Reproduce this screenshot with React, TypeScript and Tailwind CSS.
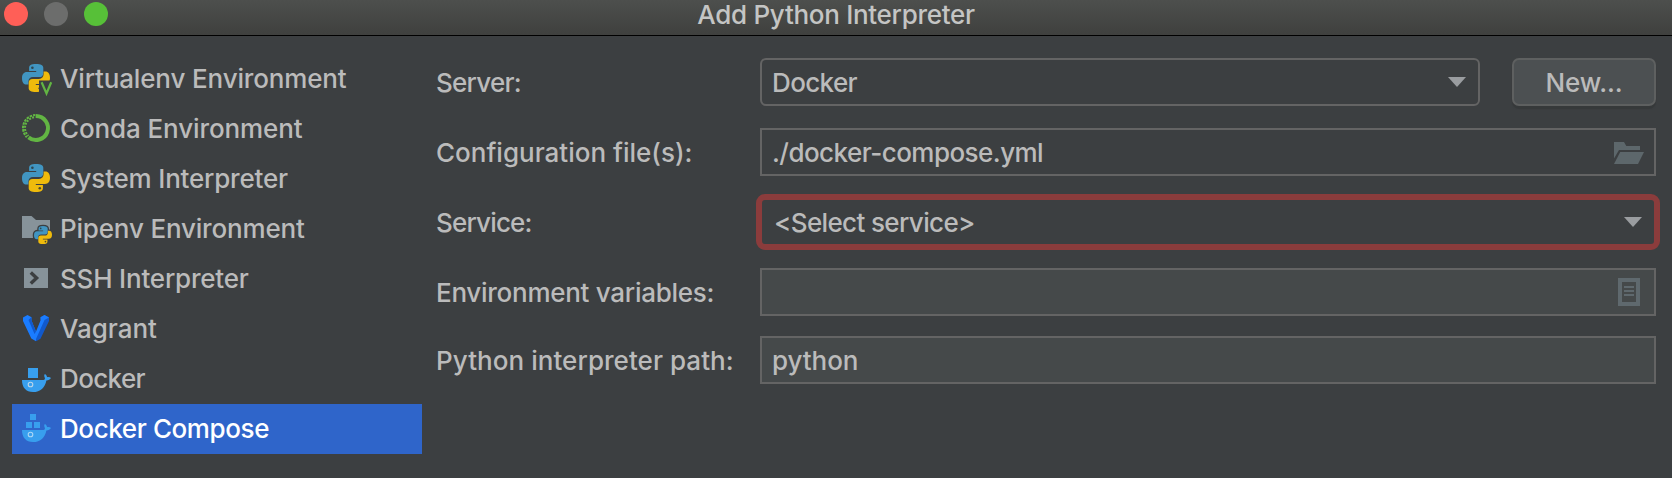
import type { ReactNode } from "react";

const SNAKE =
  "M14 0C9 0 7.1 1.3 7.1 4V7H14.2V8H5C1.7 8 0 10.3 0 14.2S1.7 20.6 4.6 20.6H6.4V18C6.4 15 8.2 13.1 11 13.1H17.4C20 13.1 21.3 11.6 21.3 9.2V4C21.3 1.3 19 0 14 0Z";

function PythonShape() {
  return (
    <>
      <path d={SNAKE} fill="#4195c1" />
      <circle cx="10.4" cy="3.8" r="1.3" fill="#2f4650" />
      <g transform="rotate(180 14 14)">
        <path d={SNAKE} fill="#efbb0c" />
        <circle cx="10.2" cy="3.8" r="1.3" fill="#4d4a30" />
      </g>
    </>
  );
}

function Icon({ children }: { children: ReactNode }) {
  return (
    <svg viewBox="0 0 32 32" className="size-8 shrink-0">
      {children}
    </svg>
  );
}

function VirtualenvIcon() {
  return (
    <Icon>
      <PythonShape />
      <path d="M17 16.5H32V32H20.5L17 28Z" fill="#3c3f41" />
      <path d="M19.6 18.2 24.5 29.4 29.2 18.2" fill="none" stroke="#62b543" strokeWidth="2.2" />
    </Icon>
  );
}

function CondaIcon() {
  return (
    <Icon>
      <path d="M14 2A12 12 0 1 1 6.5 23.4" fill="none" stroke="#62b543" strokeWidth="4" />
      <path d="M13.5 1A13 13 0 0 0 4.8 23.2" fill="none" stroke="#62b543" strokeWidth="2" strokeDasharray="2.5 1" />
      <path d="M13.6 3.1A10.9 10.9 0 0 0 6.4 21.9" fill="none" stroke="#62b543" strokeWidth="2" strokeDasharray="2 1.2" strokeDashoffset="1.6" />
    </Icon>
  );
}

function SystemIcon() {
  return (
    <Icon>
      <PythonShape />
    </Icon>
  );
}

function PipenvIcon() {
  return (
    <Icon>
      <path d="M0 2H9.5L14 6H28V24H0Z" fill="#87939a" />
      <g transform="translate(12 12) scale(.643)">
        <path d={SNAKE} fill="#3c3f41" stroke="#3c3f41" strokeWidth="4" />
        <path d={SNAKE} fill="#3c3f41" stroke="#3c3f41" strokeWidth="4" transform="rotate(180 14 14)" />
        <PythonShape />
      </g>
    </Icon>
  );
}

function SshIcon() {
  return (
    <Icon>
      <path d="M2 4H26V24H2Z" fill="#87939a" />
      <path d="M8.8 8.4 14.6 13.9 8.8 19.4" fill="none" stroke="#3c3f41" strokeWidth="3.4" />
    </Icon>
  );
}

function VagrantIcon() {
  return (
    <Icon>
      <path d="M18.5 3.2 22.5 1 27 3.5V7L18.5 24.8 14 27.2V19L19 6.5Z" fill="#1159cc" />
      <path d="M1 3.5 5.5 1 9.5 3.2V6.5L14 17.5V27.2L9.3 24.5 1 7Z" fill="#1a7cff" />
      <path d="M18.5 3.2 22.5 1 27 3.5 22.5 6 14 25V17.5L18.5 6.5Z" fill="#1a7cff" />
      <path d="M9.5 3.2V6.5L14 17.5 12.5 20 6.5 6Z" fill="#1159cc" />
    </Icon>
  );
}

function Whale({ eye }: { eye: string }) {
  return (
    <>
      <path
        d="M0 16.1H21.3C23 15.8 23.3 14.8 22.6 13.3 22 11.8 22.2 10.8 23 10.1 24.3 11 25 12 25 13.3 26.5 12.9 28 13.2 29 13.9 28 15.5 26.5 16.2 24.4 16.4 23 23.5 18.5 28 11 28 4 28 0 23.8 0 16.1Z"
        fill="#389fee"
      />
      <circle cx="8.5" cy="20.5" r="2.3" fill="none" stroke={eye} strokeWidth="1.1" />
    </>
  );
}

function DockerIcon() {
  return (
    <Icon>
      <path d="M6 4H16V14H6Z" fill="#389fee" />
      <Whale eye="#b9d5e8" />
    </Icon>
  );
}

function ComposeIcon() {
  return (
    <Icon>
      <path d="M8 0H14V6H8ZM4 8H10V14H4ZM12 8H18V14H12Z" fill="#389fee" />
      <Whale eye="#a9d6f5" />
    </Icon>
  );
}

const ENVIRONMENTS = [
  { name: "Virtualenv Environment", icon: <VirtualenvIcon />, tracking: "tracking-[-0.15px]" },
  { name: "Conda Environment", icon: <CondaIcon />, tracking: "tracking-[-0.11px]" },
  { name: "System Interpreter", icon: <SystemIcon />, tracking: "tracking-[-0.2px]" },
  { name: "Pipenv Environment", icon: <PipenvIcon />, tracking: "tracking-[-0.18px]" },
  { name: "SSH Interpreter", icon: <SshIcon />, tracking: "tracking-[-0.2px]" },
  { name: "Vagrant", icon: <VagrantIcon />, tracking: "tracking-[-0.04px]" },
  { name: "Docker", icon: <DockerIcon />, tracking: "tracking-[-0.62px]" },
  { name: "Docker Compose", icon: <ComposeIcon />, tracking: "tracking-[-0.4px]", selected: true },
];

function Arrow() {
  return (
    <svg viewBox="0 0 18 10" className="h-[10px] w-[18px] shrink-0">
      <path d="M0 0H18L9 10Z" fill="#9a9da0" />
    </svg>
  );
}

function Row({ label, tracking, children }: { label: string; tracking: string; children: ReactNode }) {
  return (
    <div className="flex h-12 items-center">
      <div className={`w-[324px] shrink-0 pt-0.5 whitespace-nowrap ${tracking}`}>{label}</div>
      {children}
    </div>
  );
}

export default function App() {
  return (
    <div className="flex h-[478px] w-[1672px] flex-col overflow-hidden bg-[#3c3f41] font-['Inter',sans-serif] text-[26px] leading-8 font-[450] text-[#bbbbbb]">
      <header className="grid h-9 shrink-0 grid-cols-[1fr_auto_1fr] border-b border-black bg-linear-to-b from-[#4d4f4d] to-[#3f403e]">
        <div className="flex gap-4 pt-[2px] pl-1">
          <span className="size-6 rounded-full bg-[#ff5f57]" />
          <span className="size-6 rounded-full bg-[#6c6d6c]" />
          <span className="size-6 rounded-full bg-[#57c038]" />
        </div>
        <h1 className="-mt-px tracking-[-0.3px] font-[450] text-[#c4c5c4]">Add Python Interpreter</h1>
      </header>

      <div className="flex flex-1">
        <nav className="ml-3 w-[410px] shrink-0 pt-[18px]">
          {ENVIRONMENTS.map((env) => (
            <div
              key={env.name}
              className={`flex h-[50px] items-center gap-[6px] pl-[10px] whitespace-nowrap ${
                env.selected ? "bg-[#2f65ca] text-white" : ""
              }`}
            >
              <span className="mt-0.5">{env.icon}</span>
              <span className={env.tracking}>{env.name}</span>
            </div>
          ))}
        </nav>

        <main className="ml-[14px] flex w-[1220px] flex-col pt-[22px]">
          <Row label="Server:" tracking="tracking-[-0.76px]">
            <div className="flex h-12 w-[720px] items-center justify-between rounded-[6px] border-2 border-[#646464] pr-3 pl-[10px]">
              <span className="pt-0.5 tracking-[-0.62px]">Docker</span>
              <Arrow />
            </div>
            <button className="ml-8 h-12 w-36 rounded-[7px] border-2 border-[#5e6060] bg-[#4c5052] pt-0.5 shadow-[0_3px_1px_#36393a]">
              <span className="tracking-[-0.15px]">New...</span>
            </button>
          </Row>

          <div className="mt-[22px]">
            <Row label="Configuration file(s):" tracking="tracking-[0px]">
              <div className="flex h-12 flex-1 items-center justify-between border-2 border-[#646464] pr-[10px] pl-[10px]">
                <span className="pt-0.5 tracking-[-0.54px]">./docker-compose.yml</span>
                <svg viewBox="0 0 30 22" className="mt-[2px] h-[22px] w-[30px]">
                  <path d="M0 0H10L12.3 4H26V8H5L0 16.5Z" fill="#5d676b" />
                  <path d="M6.2 10H30L24 22H0Z" fill="#5d676b" />
                </svg>
              </div>
            </Row>
          </div>

          <div className="mt-[22px]">
            <Row label="Service:" tracking="tracking-[-0.82px]">
              <div className="-mx-1 flex h-14 flex-1 items-center justify-between rounded-[9px] border-6 border-[#8b3c3c] pr-3 pl-3">
                <span className="pt-0.5 tracking-[-0.63px]">&lt;Select service&gt;</span>
                <Arrow />
              </div>
            </Row>
          </div>

          <div className="mt-[22px]">
            <Row label="Environment variables:" tracking="tracking-[-0.27px]">
              <div className="flex h-12 flex-1 items-center justify-end border-2 border-[#646464] bg-[#45494a] pr-[14px]">
                <svg viewBox="0 0 22 28" className="h-7 w-[22px]">
                  <path d="M2 2H20V26H2Z" fill="none" stroke="#5f696e" strokeWidth="4" />
                  <path d="M6 8H16V10H6ZM6 12H16V14H6ZM6 16H16V18H6Z" fill="#5f696e" />
                </svg>
              </div>
            </Row>
          </div>

          <div className="mt-5">
            <Row label="Python interpreter path:" tracking="tracking-[0.05px]">
              <div className="flex h-12 flex-1 items-center border-2 border-[#646464] bg-[#45494a] pl-[10px]">
                <span className="pt-0.5 tracking-[-0.07px]">python</span>
              </div>
            </Row>
          </div>
        </main>
      </div>
    </div>
  );
}
